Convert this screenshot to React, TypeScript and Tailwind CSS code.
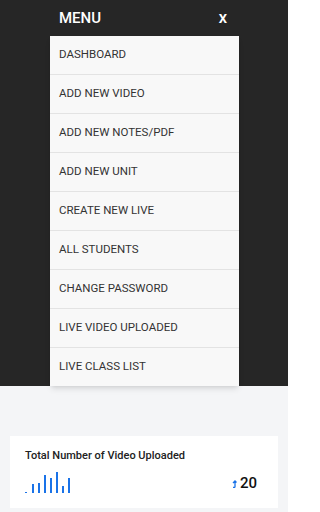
const menuItems = [
  "DASHBOARD",
  "ADD NEW VIDEO",
  "ADD NEW NOTES/PDF",
  "ADD NEW UNIT",
  "CREATE NEW LIVE",
  "ALL STUDENTS",
  "CHANGE PASSWORD",
  "LIVE VIDEO UPLOADED",
  "LIVE CLASS LIST",
];

const bars = [9, 10, 18, 15, 21, 7, 15];

function MiniChart() {
  return (
    <div className="flex h-[21px] items-end">
      <div className="mr-[5px] h-px w-[2px] bg-[#1a73e8]" />
      {bars.map((h, i) => (
        <div
          key={i}
          className="mr-[4px] w-[2px] bg-[#1a73e8]"
          style={{ height: h }}
        />
      ))}
    </div>
  );
}

export default function App() {
  return (
    <div
      className="flex h-[512px] w-[288px] flex-col overflow-hidden bg-[#f4f5f7]"
      style={{ fontFamily: "Roboto, 'Liberation Sans', sans-serif" }}
    >
      <div className="flex h-[386px] flex-col bg-[#262626]">
        <div className="flex h-[36px] shrink-0 items-center justify-between pl-[59px] pr-[61px] text-white">
          <span className="text-[15px] font-medium leading-none">MENU</span>
          <span className="text-[13px] font-bold leading-none">X</span>
        </div>
        <div className="ml-[50px] w-[189px] flex-1 overflow-hidden bg-[#f8f8f8] shadow-md">
          {menuItems.map((item) => (
            <div
              key={item}
              className="flex h-[39px] items-center border-b border-[#e3e3e3] pl-[9px] text-[11.5px] text-[#333333]"
            >
              {item}
            </div>
          ))}
        </div>
      </div>

      <div className="mx-[10px] mt-[50px] h-[72px] bg-white px-[15px] pt-[13px]">
        <p className="text-[11px] font-medium leading-[14px] text-[#222222]">
          Total Number of Video Uploaded
        </p>
        <div className="mt-[9px] flex items-end justify-between">
          <MiniChart />
          <div className="mb-[2px] mr-[6px] flex items-center gap-[3px]">
            <svg width="5" height="8" viewBox="0 0 5 8" fill="none">
              <path d="M3 7.5V1M1 3l2-2 1.5 1.5M3 7.5H1" stroke="#1a73e8" strokeWidth="1.3" />
            </svg>
            <span className="text-[15px] font-medium leading-none text-[#111111]">20</span>
          </div>
        </div>
      </div>
    </div>
  );
}
